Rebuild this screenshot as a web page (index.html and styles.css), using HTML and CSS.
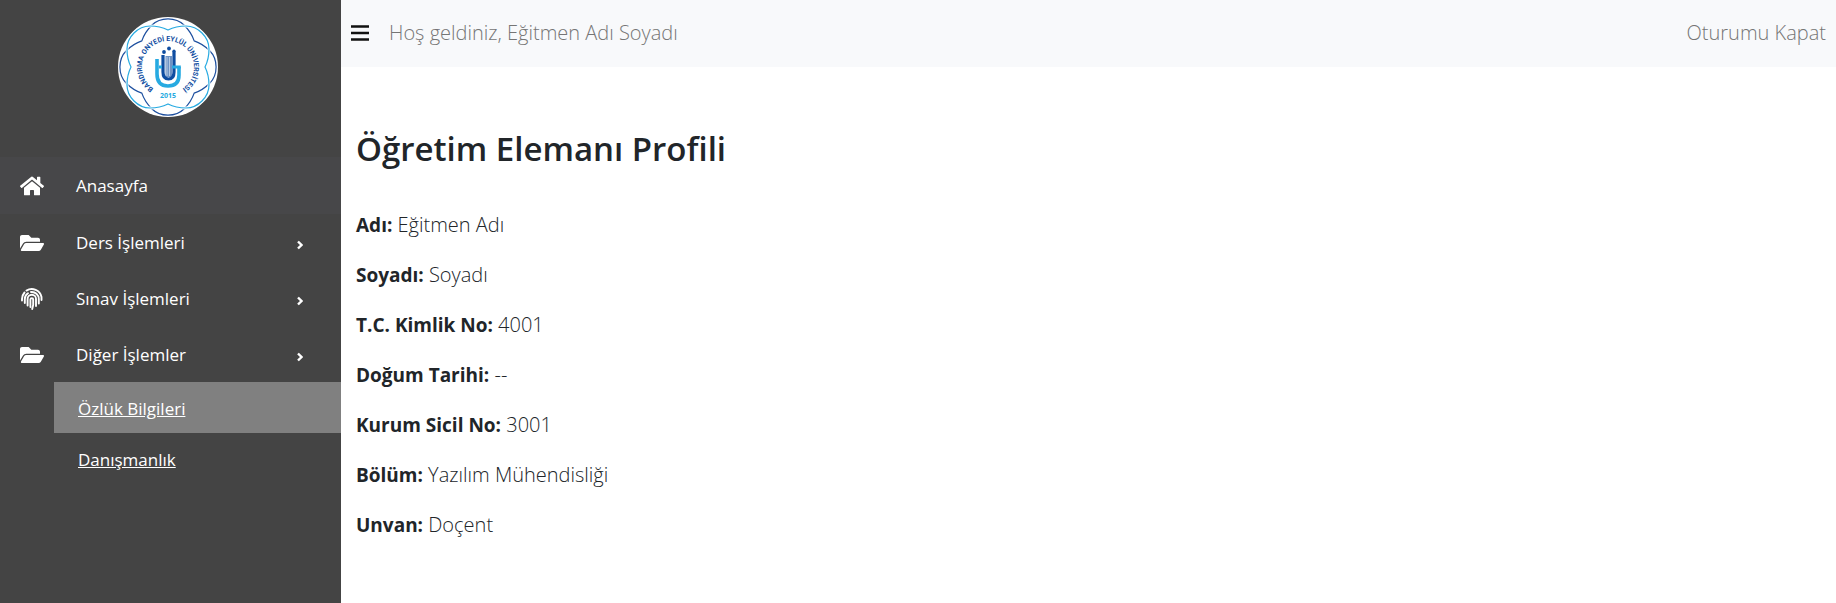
FILE: index.html
```html
<!DOCTYPE html>
<html lang="tr">
<head>
<meta charset="utf-8">
<title>Öğretim Elemanı Profili</title>
<link rel="stylesheet" href="styles.css">
</head>
<body>
<svg class="sprite" aria-hidden="true">
  <symbol id="folder" viewBox="0 0 576 512"><path d="M572.694 292.093L500.27 416.248A63.997 63.997 0 0 1 444.989 448H45.025c-18.523 0-30.064-20.093-20.731-36.093l72.424-124.155A64 64 0 0 1 152 256h399.964c18.523 0 30.064 20.093 20.73 36.093zM152 224h328v-48c0-26.51-21.49-48-48-48H272l-64-64H48C21.49 64 0 85.49 0 112v278.046l69.077-118.418C86.214 242.25 117.989 224 152 224z"/></symbol>
  <symbol id="angle" viewBox="0 0 6 10"><path d="M1 1.500 4.500 5 1 8.500" fill="none" stroke="currentColor" stroke-width="2.400"/></symbol>
</svg>
<aside class="sidebar">
  <a class="brand" href="#" aria-label="Bandırma Onyedi Eylül Üniversitesi">
    <svg class="logo" viewBox="-50 -50 100 100">
      <defs>
        <path id="ring" d="M0 26A26 26 0 0 1 0 -26A26 26 0 0 1 0 26"/>
        <path id="petals" d="M0 -37C-6 -40 -12 -41 -18 -41C-30 -41 -41 -30 -41 -18C-41 -12 -40 -6 -37 0C-40 6 -41 12 -41 18C-41 30 -30 41 -18 41C-12 41 -6 40 0 37C6 40 12 41 18 41C30 41 41 30 41 18C41 12 40 6 37 0C40 -6 41 -12 41 -18C41 -30 30 -41 18 -41C12 -41 6 -40 0 -37Z"/>
      </defs>
      <circle r="50" fill="#fff"/>
      <g fill="none" stroke-width="1.200">
        <use href="#petals" stroke="#1d4f9f" transform="rotate(45)"/>
        <use href="#petals" stroke="#fff" stroke-width="3"/>
        <use href="#petals" stroke="#27aae1"/>
      </g>
      <text class="logo-name"><textPath href="#ring" startOffset="50%" text-anchor="middle">BANDIRMA ONYEDİ EYLÜL ÜNİVERSİTESİ</textPath></text>
      <path d="M-11 -8V7Q-11 19 0 19Q11 19 11 8V0" fill="none" stroke="#27aae1" stroke-width="3.600"/>
      <path d="M-2.500 -11V10H4V-11Z" fill="#6f93c4"/>
      <path d="M-1 -10V9M1.500 -10V9" stroke="#d5e2f0" stroke-width="0.700"/>
      <path d="M-5 -12V5Q-5 12 0.500 12Q6 12 6 5V-16" fill="none" stroke="#0f4da1" stroke-width="3.200"/>
      <path d="M-9 0H-6M4 0H12.800" stroke="#27aae1" stroke-width="3.200"/>
      <g fill="#0f4da1"><circle cx="-4" cy="-15" r="1.900"/><circle cx="1" cy="-18.500" r="1.900"/><circle cx="6" cy="-16" r="1.600"/></g>
      <text class="logo-year" y="31" text-anchor="middle">2015</text>
    </svg>
  </a>
  <nav class="menu">
    <a class="item current" href="#"><svg class="icon" viewBox="0 0 576 512"><path d="M280.370 148.260L96 300.110V464a16 16 0 0 0 16 16l112.060-.290a16 16 0 0 0 15.920-16V368a16 16 0 0 1 16-16h64a16 16 0 0 1 16 16v95.640a16 16 0 0 0 16 16.050L464 480a16 16 0 0 0 16-16V300L295.670 148.260a12.190 12.190 0 0 0-15.300 0zM571.600 251.470L488 182.560V44.050a12 12 0 0 0-12-12h-56a12 12 0 0 0-12 12v72.610L318.470 43a48 48 0 0 0-61 0L4.340 251.470a12 12 0 0 0-1.600 16.900l25.500 31A12 12 0 0 0 45.150 301l235.220-193.740a12.190 12.190 0 0 1 15.300 0L530.900 301a12 12 0 0 0 16.900-1.600l25.500-31a12 12 0 0 0-1.700-16.930z"/></svg><span>Anasayfa</span></a>
    <a class="item" href="#"><svg class="icon"><use href="#folder"/></svg><span>Ders İşlemleri</span><svg class="angle"><use href="#angle"/></svg></a>
    <a class="item" href="#"><svg class="icon" viewBox="0 0 24 22"><g fill="none" stroke="currentColor" stroke-width="1.900" stroke-linecap="round"><path d="M2 12.500V11A10 10 0 0 1 4.500 4.500M6.500 2.600A10 10 0 0 1 21.500 9V12"/><path d="M4.800 15V11A7 7 0 0 1 8 5.200M11 4A7 7 0 0 1 18.800 11V15.500"/><path d="M7.600 17.500V11A4.200 4.200 0 0 1 16 11V18"/><path d="M10.400 19V11.500A1.400 1.400 0 0 1 13.200 11.500V17L12.200 21"/></g></svg><span>Sınav İşlemleri</span><svg class="angle"><use href="#angle"/></svg></a>
    <a class="item" href="#"><svg class="icon"><use href="#folder"/></svg><span>Diğer İşlemler</span><svg class="angle"><use href="#angle"/></svg></a>
    <div class="submenu">
      <a class="subitem active" href="#">Özlük Bilgileri</a>
      <a class="subitem" href="#">Danışmanlık</a>
    </div>
  </nav>
</aside>
<div class="page">
  <header class="topbar">
    <button class="toggle" aria-label="Menü"><svg viewBox="0 0 18 16"><path d="M0 1.500H18M0 8H18M0 14.500H18" stroke="currentColor" stroke-width="2.600"/></svg></button>
    <span class="welcome">Hoş geldiniz, Eğitmen Adı Soyadı</span>
    <a class="logout" href="#">Oturumu Kapat</a>
  </header>
  <main class="content">
    <h1>Öğretim Elemanı Profili</h1>
    <p><strong>Adı:</strong> Eğitmen Adı</p>
    <p><strong>Soyadı:</strong> Soyadı</p>
    <p><strong>T.C. Kimlik No:</strong> 4001</p>
    <p><strong>Doğum Tarihi:</strong> --</p>
    <p><strong>Kurum Sicil No:</strong> 3001</p>
    <p><strong>Bölüm:</strong> Yazılım Mühendisliği</p>
    <p><strong>Unvan:</strong> Doçent</p>
  </main>
</div>
</body>
</html>
```
FILE: styles.css
```css
* { box-sizing: border-box; }
body {
  margin: 0;
  min-height: 100vh;
  display: flex;
  font-family: "Segoe UI", "Open Sans", "Noto Sans", sans-serif;
  font-size: 20px;
  font-weight: 300;
  line-height: 30px;
  color: #212529;
  background: #fff;
}
.sprite { position: absolute; width: 0; height: 0; }
.sidebar {
  flex: 0 0 341px;
  background: #444;
  color: #fff;
  font-size: 17px;
  font-weight: 400;
}
.brand { display: flex; justify-content: center; padding: 17px 6px 40px 0; }
.logo { width: 100px; height: 100px; }
.logo-name { font-family: Roboto, sans-serif; font-size: 7px; font-weight: 700; fill: #0f4da1; }
.logo-year { font-size: 7px; font-weight: 700; fill: #27aae1; }
.item {
  display: flex;
  align-items: center;
  height: 56px;
  padding: 2px 38px 0 20px;
  color: inherit;
  text-decoration: none;
}
.item span { flex: 1; padding-left: 32px; }
.current { height: 57px; padding-top: 0; background: #474749; }
.icon { width: 24px; height: 22px; fill: currentColor; }
.angle { width: 6px; height: 10px; margin-top: 4px; }
.submenu { padding-left: 54px; }
.subitem {
  display: block;
  padding: 12px 24px 9px;
  color: inherit;
}
.active { background: #808080; }
.page { flex: 1; min-width: 0; }
.topbar {
  display: flex;
  align-items: center;
  height: 67px;
  padding: 0 10px 2px;
  background: #f8f9fb;
  color: #757575;
}
.toggle {
  display: flex;
  padding: 0;
  border: 0;
  background: none;
  color: #111;
}
.toggle svg { width: 18px; height: 16px; }
.welcome { margin-left: 20px; }
.logout { margin-left: auto; color: inherit; text-decoration: none; }
.content { padding: 60px 15px 40px; }
h1 { margin: 0 0 39px; font-size: 33px; font-weight: 600; line-height: 44px; }
p { margin: 0 0 20px; }
strong { font-size: 19px; font-weight: 700; }
```
